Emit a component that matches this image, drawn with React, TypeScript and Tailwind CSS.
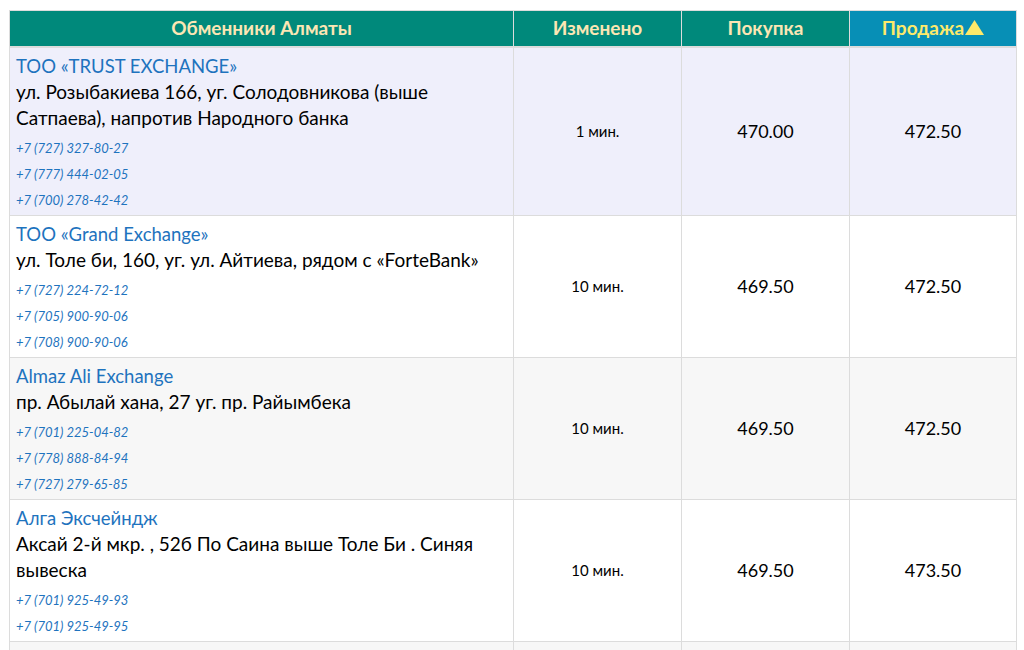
type Row = {
  name: string;
  address: string;
  phones: string[];
  changed: string;
  buy: string;
  sell: string;
  bg: string;
};

const rows: Row[] = [
  {
    name: "ТОО «TRUST EXCHANGE»",
    address: "ул. Розыбакиева 166, уг. Солодовникова (выше Сатпаева), напротив Народного банка",
    phones: ["+7 (727) 327-80-27", "+7 (777) 444-02-05", "+7 (700) 278-42-42"],
    changed: "1 мин.",
    buy: "470.00",
    sell: "472.50",
    bg: "bg-[#efeffb]",
  },
  {
    name: "ТОО «Grand Exchange»",
    address: "ул. Толе би, 160, уг. ул. Айтиева, рядом с «ForteBank»",
    phones: ["+7 (727) 224-72-12", "+7 (705) 900-90-06", "+7 (708) 900-90-06"],
    changed: "10 мин.",
    buy: "469.50",
    sell: "472.50",
    bg: "bg-white",
  },
  {
    name: "Almaz Ali Exchange",
    address: "пр. Абылай хана, 27 уг. пр. Райымбека",
    phones: ["+7 (701) 225-04-82", "+7 (778) 888-84-94", "+7 (727) 279-65-85"],
    changed: "10 мин.",
    buy: "469.50",
    sell: "472.50",
    bg: "bg-[#f7f7f7]",
  },
  {
    name: "Алга Эксчейндж",
    address: "Аксай 2-й мкр. , 52б По Саина выше Толе Би . Синяя вывеска",
    phones: ["+7 (701) 925-49-93", "+7 (701) 925-49-95"],
    changed: "10 мин.",
    buy: "469.50",
    sell: "473.50",
    bg: "bg-white",
  },
  {
    name: "Обменный пункт",
    address: "ул. Абая",
    phones: ["+7 (727) 000-00-00"],
    changed: "10 мин.",
    buy: "469.50",
    sell: "473.50",
    bg: "bg-[#f7f7f7]",
  },
];

export default function App() {
  return (
    <div className="h-[650px] overflow-hidden bg-white pt-[10px] pl-[9px] pr-[7px] font-['Lato','Noto_Sans',sans-serif]">
      <table className="w-full table-fixed border-collapse">
        <colgroup>
          <col className="w-[504px]" />
          <col className="w-[168px]" />
          <col className="w-[168px]" />
          <col />
        </colgroup>
        <thead>
          <tr className="h-[36px] text-[19px] font-extrabold text-[#fbe6b4]">
            <th className="border border-b-2 border-[#dcdcdc] bg-[#00897b]">Обменники Алматы</th>
            <th className="border border-b-2 border-[#dcdcdc] bg-[#00897b]">Изменено</th>
            <th className="border border-b-2 border-[#dcdcdc] bg-[#00897b]">Покупка</th>
            <th className="border border-b-2 border-[#dcdcdc] bg-[#078fb6] text-[#fde96a]">
              <span className="inline-flex items-center gap-[1px]">
                Продажа
                <svg width="19" height="15" viewBox="0 0 19 15" className="mb-[2px]">
                  <path d="M9.5 0L19 15H0z" fill="#fde96a" />
                </svg>
              </span>
            </th>
          </tr>
        </thead>
        <tbody>
          {rows.map((r) => (
            <tr key={r.name} className={r.bg}>
              <td className="border border-[#dcdcdc] px-[6px] pt-[5px] pb-[2px] align-top">
                <a href="#" className="block text-[18.5px] leading-[26px] text-[#1e73be]">
                  {r.name}
                </a>
                <div className="text-[19px] leading-[26px] text-black">{r.address}</div>
                <div className="pt-[4px]">
                  {r.phones.map((p) => (
                    <a
                      key={p}
                      href="#"
                      className="block text-[13px] italic leading-[26px] text-[#1e73be]"
                    >
                      {p}
                    </a>
                  ))}
                </div>
              </td>
              <td className="border border-[#dcdcdc] text-center text-[15px] text-black">
                {r.changed}
              </td>
              <td className="border border-[#dcdcdc] text-center text-[18px] text-black">
                {r.buy}
              </td>
              <td className="border border-[#dcdcdc] text-center text-[18px] text-black">
                {r.sell}
              </td>
            </tr>
          ))}
        </tbody>
      </table>
    </div>
  );
}
